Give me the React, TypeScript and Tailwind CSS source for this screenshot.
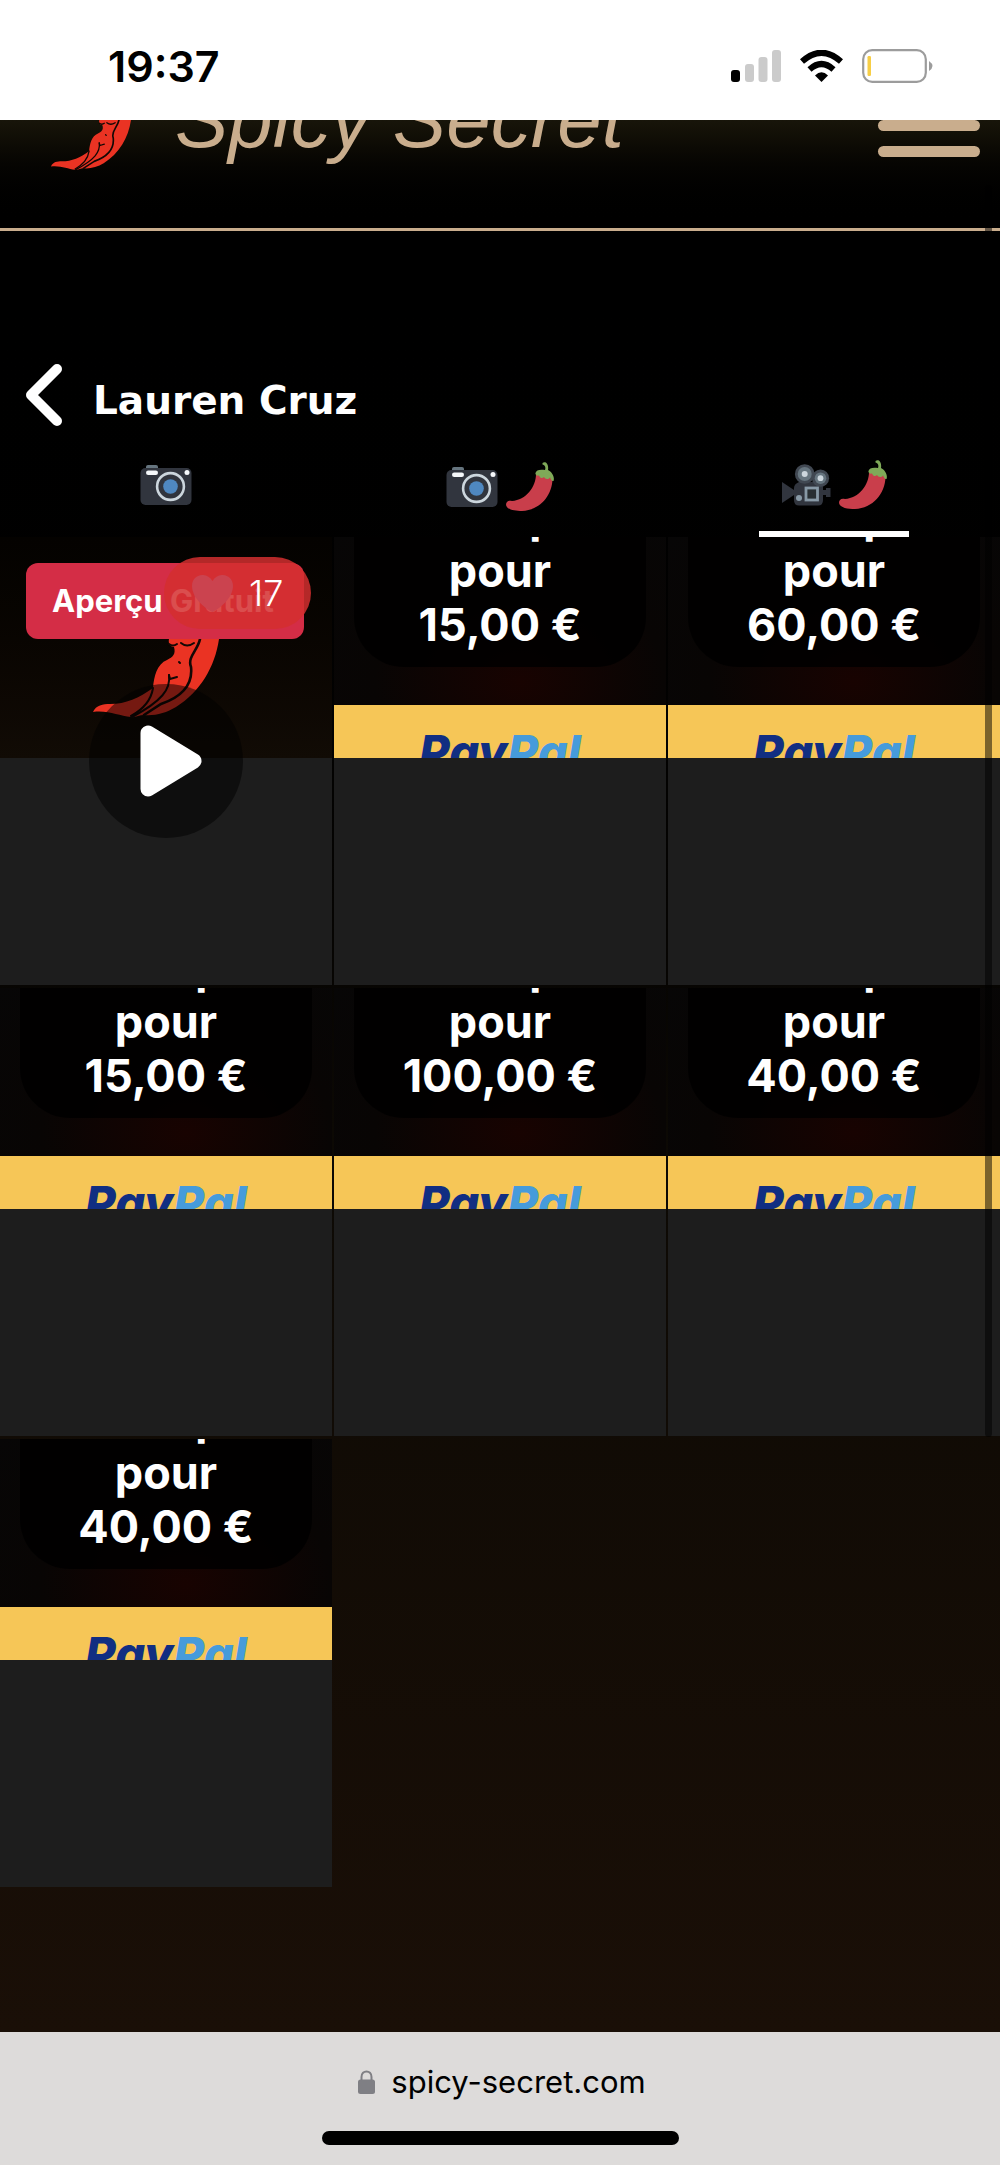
import React from 'react';

const INTER = "font-['Inter','Noto_Sans',sans-serif]";

interface Tile {
  id: number;
  price: string | null;
}

const tiles: Tile[] = [
  { id: 1, price: null },
  { id: 2, price: '15,00 €' },
  { id: 3, price: '60,00 €' },
  { id: 4, price: '15,00 €' },
  { id: 5, price: '100,00 €' },
  { id: 6, price: '40,00 €' },
  { id: 7, price: '40,00 €' },
];

const CameraIcon = () => (
  <svg viewBox="0 0 52 42" className="w-[52px] h-[42px]" aria-hidden="true">
    <rect x="6" y="1" width="12" height="8" rx="2" fill="#66757f" />
    <rect x="0.5" y="4" width="51" height="37" rx="5" fill="#31353e" />
    <rect x="6" y="6.5" width="12" height="4.5" rx="2.2" fill="#f5f8fa" />
    <circle cx="47" cy="8.5" r="2.5" fill="#f5f8fa" />
    <circle cx="30.5" cy="22.5" r="13.4" fill="#31353e" stroke="#ccd6dd" strokeWidth="2.6" />
    <circle cx="30.5" cy="22.5" r="7.3" fill="#4f88c1" />
  </svg>
);

const PepperIcon = () => (
  <svg viewBox="0 0 48 49" className="w-12 h-[49px]" aria-hidden="true">
    <path
      d="M30 12 C30 25 20 38 6 39 C2 38 0 40 0 43 C1 48 9 49 16 49 C34 48 46 34 46.5 17 C42 12 34 10 30 12Z"
      fill="#c93e4b"
    />
    <path
      d="M36.5 1 C39 -1 43 1 42 8 C46 10 49 15 47.5 19 C45 19 45 17 44 15.5 C42 18 39 17 38 15 C36 17 34 16 33 13.5 C31 14 29 13 29.5 11 C30 8 34 7 39 8 C40 5 39 3 36.5 2.5Z"
      fill="#7fa958"
    />
  </svg>
);

const MovieCameraIcon = () => (
  <svg viewBox="0 0 49 42" className="w-[49px] h-[42px]" aria-hidden="true">
    <path d="M0 18 L12 26 V31 L0 39Z" fill="#31353e" />
    <path d="M17 18 H36 Q41 18 41 23 V36 Q41 41.5 36 41.5 H17 Q12 41.5 12 36 V24 Q12 20 17 18Z" fill="#31353e" />
    <path d="M41 26 H44 V24 H48.5 V33 H44 V31 H41Z" fill="#31353e" />
    <circle cx="22.7" cy="10" r="9.8" fill="#414852" />
    <circle cx="38.5" cy="14.2" r="8.6" fill="#414852" />
    <circle cx="22.7" cy="10" r="7" fill="#66757f" />
    <circle cx="22.7" cy="10" r="3" fill="#ccd6dd" />
    <circle cx="38.5" cy="14.2" r="5.8" fill="#66757f" />
    <circle cx="38.5" cy="14.2" r="2.9" fill="#ccd6dd" />
    <rect x="24" y="24" width="11.5" height="12" fill="#292f33" stroke="#8899a6" strokeWidth="2.8" />
    <circle cx="17" cy="34" r="3" fill="#8899a6" />
  </svg>
);

// Lower half of the pepper mascot, the same drawing for the header and the preview
const Mascot = ({ className }: { className: string }) => (
  <svg viewBox="0 0 126 80" className={className} aria-hidden="true">
    <path
      d="M76 0 H126 C122 28 107 53 83 68 C73 74 62 77 51 76 C46 76 42 79 38 78 C26 77 15 71 0 73 C3 66 10 65 17 65 C33 65 46 59 60 49 C61 37 64 25 74 21 C80 18 83 15 81 8 C77 8 75 4 76 0Z"
      fill="#ea3323"
    />
    <g fill="none" stroke="#120805" strokeWidth="2" strokeLinecap="round">
      <path d="M107 0 C105 11 94 18 98 28 C100 46 88 58 68 65 L51 76" strokeWidth="2.6" />
      <path d="M76 36 C78 50 69 62 39 78" />
      <path d="M60 49 C58 62 49 71 38 77" />
      <path d="M76 36 L77 40 L84 38" />
      <path d="M88 4 Q94 9 101 4" />
      <path d="M76 5 Q80 8 84 5" />
      <path d="M86 23 L87 24" />
    </g>
  </svg>
);

const StatusBar = () => (
  <div className={`flex h-[120px] items-center justify-between bg-white pl-[108px] pr-[66px] pt-3 text-black ${INTER}`}>
    <time className="text-[43px] leading-[48px] font-semibold">19:37</time>
    <div className="flex items-center gap-[19px]">
      <svg viewBox="0 0 50 32" className="h-8 w-[50px]" aria-label="Signal">
        <rect x="0" y="20" width="9" height="12" rx="3" fill="#000" />
        <rect x="14" y="14" width="9" height="18" rx="3" fill="#cbcbcb" />
        <rect x="27.5" y="7" width="9" height="25" rx="3" fill="#cbcbcb" />
        <rect x="41" y="0" width="9" height="32" rx="3" fill="#cbcbcb" />
      </svg>
      <svg viewBox="0 0 43 32" className="h-8 w-[43px]" aria-label="Wi-Fi">
        <path d="M2 11.5 Q21.5 -6 41 11.5" fill="none" stroke="#000" strokeWidth="6" />
        <path d="M9.5 19.5 Q21.5 8.5 33.5 19.5" fill="none" stroke="#000" strokeWidth="6" />
        <path d="M15 25.5 Q21.5 19 28 25.5 L21.5 32Z" />
      </svg>
      <svg viewBox="0 0 72 34" className="h-[34px] w-[72px]" aria-label="Battery">
        <rect x="1.2" y="1.2" width="62.6" height="31.6" rx="9" fill="none" stroke="#9c9c9c" strokeWidth="2.2" />
        <rect x="5.5" y="7" width="3.5" height="20" rx="1.2" fill="#f7ce45" />
        <path d="M67 12 Q74 17 67 22Z" fill="#9c9c9c" />
      </svg>
    </div>
  </div>
);

const Header = () => (
  <header className="flex h-[111px] justify-between overflow-hidden border-b-[3px] border-[#c9ad8d] bg-linear-to-b from-[#18150a] to-black pl-[51px] pr-5">
    <div className="flex gap-11">
      <Mascot className="h-[51px] w-20" />
      <a
        href="#"
        className="-mt-12 h-[90px] whitespace-nowrap font-['Liberation_Sans',Arial,sans-serif] text-[80px] leading-[96px] italic text-[#c9ad8d]"
      >
        Spicy Secret
      </a>
    </div>
    <button aria-label="Menu" className="flex h-[37px] w-[102px] flex-col justify-between">
      <span className="h-[11px] w-full rounded-full bg-[#c9ad8d]" />
      <span className="h-[11px] w-full rounded-full bg-[#c9ad8d]" />
    </button>
  </header>
);

const Tabs = () => (
  <nav className="grid grid-cols-3 gap-x-0.5">
    <button aria-label="Photos" className="flex h-[77px] items-start justify-center pt-1">
      <CameraIcon />
    </button>
    <button aria-label="Photos épicées" className="flex h-[77px] items-center justify-center gap-2 pb-6">
      <CameraIcon />
      <PepperIcon />
    </button>
    <button aria-label="Vidéos épicées" className="flex h-[77px] flex-col items-center justify-between">
      <span className="flex items-center gap-2">
        <MovieCameraIcon />
        <PepperIcon />
      </span>
      <span className="h-[6px] w-[150px] bg-white" />
    </button>
  </nav>
);

const PreviewTile = () => (
  <article className="relative">
    <div className="flex h-[221px] flex-col bg-linear-to-b from-[#040200] to-[#110b05] pt-[26px] pr-7 pl-[26px]">
      <div className="flex h-[76px] shrink-0 items-center rounded-xl bg-[#d42d46] pl-[26px] text-[31px] leading-9 font-bold whitespace-nowrap text-white">
        Aperçu Gratuit
      </div>
      <Mascot className="ml-[67px] h-[80px] w-[126px]" />
    </div>
    <div className="h-[227px] bg-[#1d1d1d]" />
    <button
      aria-label="Lire la vidéo"
      className="absolute top-[147px] left-[89px] flex size-[154px] items-center justify-center rounded-full bg-black/50"
    >
      <svg viewBox="0 0 62 72" className="ml-[10px] h-[72px] w-[62px]" aria-hidden="true">
        <path d="M8 8 V64 L54 36Z" fill="#fff" stroke="#fff" strokeWidth="15" strokeLinejoin="round" />
      </svg>
    </button>
    <button className="absolute top-[20px] left-[164px] flex h-[72px] w-[147px] items-center gap-4 rounded-full bg-[#d32f2f]/85 pl-7 text-[36px] font-light text-white">
      <svg viewBox="0 0 41 37" className="h-[37px] w-[41px]" aria-hidden="true">
        <path
          d="M20.5 37 C11 32 0 22 0 11 C0 -1 15 -4 20.5 6 C26 -4 41 -1 41 11 C41 22 30 32 20.5 37Z"
          fill="#cb434f"
        />
      </svg>
      17
    </button>
  </article>
);

const LockedTile = ({ price }: { price: string }) => (
  <article className="bg-[#1d1d1d]">
    <div className="flex h-[221px] flex-col overflow-hidden bg-[#070605]">
      <div className="flex h-[168px] shrink-0 flex-col justify-end bg-[radial-gradient(ellipse_at_56%_86%,#180301_0%,#080504_55%,#070606_100%)] px-5 pb-[38px]">
        <button className="rounded-b-[50px] bg-black/85 pb-[15px] text-center text-[45px] leading-[54px] font-bold text-white">
          Débloquer
          <br />
          pour
          <br />
          {price}
        </button>
      </div>
      <button
        aria-label="PayPal"
        className="h-[88px] shrink-0 bg-[#f6c657] pt-[6px] text-center text-[47px] leading-[58px] font-extrabold italic [font-feature-settings:'cv11']"
      >
        <span className="text-[#112e82]">Pay</span>
        <span className="text-[#469bdb]">Pal</span>
      </button>
    </div>
    <div className="h-[227px]" />
  </article>
);

const AddressBar = () => (
  <footer className={`flex h-[133px] flex-col items-center justify-between bg-[#dddbda] pt-[30px] pb-5 ${INTER}`}>
    <div className="flex items-center gap-4 pl-1 text-[31px] leading-10 text-black">
      <svg viewBox="0 0 17 24" className="h-6 w-[17px]" aria-hidden="true">
        <path d="M3.5 11 V7 C3.5 -0.5 13.5 -0.5 13.5 7 V11" fill="none" stroke="#7f7f84" strokeWidth="2" />
        <rect y="9.5" width="17" height="14.5" rx="2.5" fill="#7f7f84" />
      </svg>
      spicy-secret.com
    </div>
    <div className="h-[14px] w-[357px] rounded-full bg-black" />
  </footer>
);

export default function App() {
  return (
    <div className={`relative ${INTER}`}>
      <StatusBar />
      <Header />
      <main className="bg-linear-to-b from-black via-[#0c0904] to-[#1a0f07] pt-[133px] pb-[145px]">
        <div className="flex h-[62px] items-center gap-[31px] pl-[26px]">
          <button aria-label="Retour">
            <svg viewBox="0 0 36 62" className="h-[62px] w-9" aria-hidden="true">
              <path
                d="M31 5 L5 31 L31 57"
                fill="none"
                stroke="#fff"
                strokeWidth="10"
                strokeLinecap="round"
                strokeLinejoin="round"
              />
            </svg>
          </button>
          <h1 className="pt-3 font-['DejaVu_Sans',sans-serif] text-[39px] leading-[48px] font-bold text-white">
            Lauren Cruz
          </h1>
        </div>
        <div className="pt-[34px]">
          <Tabs />
        </div>
        <div className="grid grid-cols-3 gap-x-0.5 gap-y-[3px]">
          {tiles.map((tile) =>
            tile.price ? <LockedTile key={tile.id} price={tile.price} /> : <PreviewTile key={tile.id} />
          )}
        </div>
      </main>
      <AddressBar />
      <div className="absolute top-[185px] right-2 h-[1252px] w-[7px] rounded-full bg-black/50" />
    </div>
  );
}
